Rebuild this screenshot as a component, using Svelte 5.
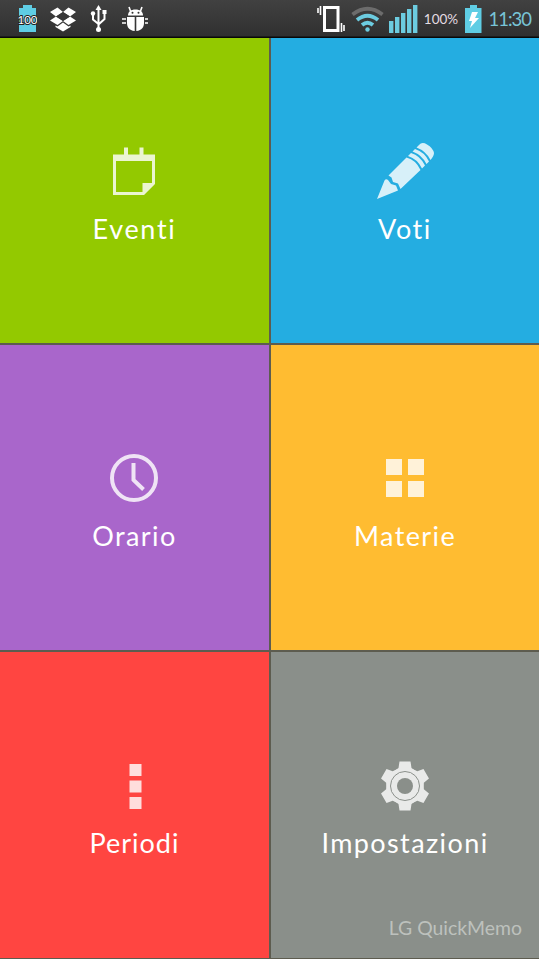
<script lang="ts">
  const tiles = [
    { id: "events", label: "Eventi" },
    { id: "marks", label: "Voti" },
    { id: "timetable", label: "Orario" },
    { id: "subjects", label: "Materie" },
    { id: "periods", label: "Periodi" },
    { id: "settings", label: "Impostazioni" },
  ];

  const toothAngles = [0, 60, 120, 180, 240, 300];
  const signalBars = [12, 16, 20, 24, 28];
</script>

<div class="screen">
  <header>
    <div class="notifications">
      <svg width="19" height="38" viewBox="0 0 19 38">
        <path d="M5 5h9v3h4v24H1V8h4z" fill="#5fcde4" />
        <text x="9.5" y="24" text-anchor="middle" class="level">100</text>
      </svg>
      <svg width="26" height="38" viewBox="0 0 26 38" fill="#fff">
        <path d="M7.5 7.5 13 12 6 16.5 0 12zM18.5 7.5 26 12 20 16.5 13 12zM0 20.5 6 16.5 13 21 7.5 25zM26 20.5 20 16.5 13 21 18.5 25zM13 22.5 18.5 26.5 20.5 25.5V27L13 31.5 5.500 27V25.5L7.5 26.5z" />
        <path d="M6 16.5 13 12 20 16.5 13 21z" fill="#383838" />
      </svg>
      <svg width="20" height="38" viewBox="0 0 20 38" fill="#fff">
        <path d="M9.5 5 12.5 10h-6z" />
        <path d="M9.5 9v20M4 14v5.5l5.5 4.5M15.5 13v6l-6 5.5" fill="none" stroke="#fff" stroke-width="2" />
        <circle cx="4" cy="13.5" r="2.2" />
        <rect x="13.5" y="10" width="4" height="4" />
        <circle cx="9.5" cy="29.5" r="2.5" />
      </svg>
      <svg width="26" height="38" viewBox="0 0 26 38" fill="#fff">
        <path d="M6 15.5c0-4 3-6 7.5-6s7.5 2 7.5 6z" />
        <path d="M8.5 11 7 7M18.5 11 20 7M0 19h4M0 23h4M23 19h3M23 23h3" stroke="#fff" stroke-width="1.6" />
        <path d="M5 17h7.7v14C7 30.5 5 27 5 23zM14.3 17H22v6c0 4-2 7.5-7.7 8z" />
        <circle cx="10.5" cy="12.8" r="1" fill="#333" />
        <circle cx="16.5" cy="12.8" r="1" fill="#333" />
      </svg>
    </div>
    <div class="indicators">
      <svg width="29" height="38" viewBox="0 0 29 38" fill="none" stroke="#fff">
        <rect x="7.5" y="7.5" width="13.5" height="23" stroke-width="3" />
        <path d="M1 8v5M3.5 6v9M24.5 23v9M27 25v6" stroke-width="1.6" />
      </svg>
      <svg width="33" height="38" viewBox="0 0 33 38" fill="none" stroke="#6ccce0" stroke-width="3.8">
        <path d="M1.5 14.5q15-11.5 30 0" stroke="#6c6c6c" />
        <path d="M6 20q10.5-8.5 21 0M11 25q5.5-4.5 11 0" />
        <circle cx="16.5" cy="29.5" r="2.2" fill="#6ccce0" stroke="none" />
      </svg>
      <svg width="29" height="38" viewBox="0 0 29 38" fill="#6ccce0">
        {#each signalBars as height, i}
          <rect x={i * 6} y={33 - height} width="4.4" {height} />
        {/each}
      </svg>
      <span class="percent">100%</span>
      <svg width="18" height="38" viewBox="0 0 18 38">
        <path d="M6 5h7v3h4.500v25H1V8h5z" fill="#5fcde4" />
        <path d="M8 12h6l-3 6h4L6 28l2-7H5z" fill="#fff" />
      </svg>
      <span class="clock">11:30</span>
    </div>
  </header>

  <main>
    {#each tiles as tile}
      <div class="tile {tile.id}">
        <svg class="icon" width="64" height="64" viewBox="0 0 64 64">
          {#if tile.id === "events"}
            <path fill-rule="evenodd" d="M11 14.5h11V7.500h4v7h11.5v-7h4v7H53V44L42 55H11zM14 21v31h26.5v-9H50V21z" />
          {:else if tile.id === "marks"}
            <path d="M4 59 11.5 40.5Q13 38.5 15 40L18 44l5 1.5 2 5zM15.5 35.5 33.5 17.5Q43 20 47.5 30L27.5 49 25 43.5 20 42 18.5 37.5z" />
            <path d="M35 16 38 13Q47 15.5 52 25.5L49 28.5Q44.5 19 35 16zM39.5 11.5 42 9Q51.5 12 56 21.5L53.5 24Q49 15 39.5 11.5zM43.5 7.500 46 5Q49 1.5 54 4.5 60 8 61 13 61 16 57.5 20 53 11 43.5 7.5z" />
          {:else if tile.id === "timetable"}
            <g fill="none" stroke="#fff" stroke-width="4">
              <circle cx="32" cy="31" r="22" />
              <path d="M31.5 16v17l10 9.5" />
            </g>
          {:else if tile.id === "subjects"}
            <path d="M13 12h16v16H13zM35 12h16v16H35zM13 34h16v16H13zM35 34h16v16H35z" />
          {:else if tile.id === "periods"}
            <path d="M27.5 10h12v12h-12zM27.5 26.5h12v12h-12zM27.5 43h12v12h-12z" />
          {:else}
            <mask id="hub">
              <rect width="64" height="64" fill="#fff" />
              <circle cx="32" cy="32" r="8" fill="#000" />
              <circle cx="32" cy="32" r="14.5" fill="none" stroke="#000" stroke-width="1" />
            </mask>
            <g mask="url(#hub)">
              <path d="M32 14.5 47 23v18L32 49.5 17 41V23z" />
              {#each toothAngles as angle}
                <path d="M26.5 7.5h11l1 6.5 5 3.500L32 28 20.5 17.500l5-3.500z" transform="rotate({angle} 32 32)" />
              {/each}
            </g>
          {/if}
        </svg>
        <span class="label">{tile.label}</span>
        {#if tile.id === "settings"}
          <span class="watermark">LG QuickMemo</span>
        {/if}
      </div>
    {/each}
  </main>
</div>

<style>
  .screen {
    display: flex;
    flex-direction: column;
    width: 539px;
    height: 959px;
    overflow: hidden;
    font-family: Lato, "Open Sans", sans-serif;
    background: #5d5c4f;
  }

  header {
    flex: 0 0 38px;
    display: flex;
    justify-content: space-between;
    box-sizing: border-box;
    padding: 0 8px 0 18px;
    background: linear-gradient(#414141, #303030 36px, #080808 37px);
  }

  .notifications,
  .indicators {
    display: flex;
    align-items: center;
  }

  .notifications {
    gap: 13px;
  }

  .indicators {
    gap: 5px;
  }

  header svg {
    flex: none;
    display: block;
  }

  .level {
    font-size: 11.5px;
    fill: #fff;
    stroke: #222;
    stroke-width: 2px;
    paint-order: stroke;
  }

  .percent {
    width: 36px;
    text-align: center;
    font-size: 13.5px;
    color: #e4dce2;
    white-space: nowrap;
  }

  .clock {
    width: 44px;
    text-align: right;
    font-size: 18.5px;
    letter-spacing: -1px;
    color: #78c4d6;
    white-space: nowrap;
  }

  main {
    flex: 1;
    display: grid;
    grid-template-columns: 269px 268px;
    grid-template-rows: 305px 305px 306px;
    gap: 2px;
  }

  .tile {
    position: relative;
    display: flex;
    flex-direction: column;
    align-items: center;
    padding-top: 102px;
  }

  .tile:nth-child(odd) .icon {
    margin-right: 1px;
  }

  .icon {
    flex: none;
    fill: #fff;
    opacity: 0.82;
  }

  .label {
    margin-top: 8px;
    font-size: 27px;
    line-height: 34px;
    letter-spacing: 1.4px;
    color: #fff;
    white-space: nowrap;
  }

  .events {
    background: #93c900;
  }

  .events .label {
    letter-spacing: 1.7px;
  }

  .marks {
    background: #24ade1;
  }

  .marks .label {
    letter-spacing: 1.6px;
  }

  .timetable {
    background: #a966cb;
  }

  .subjects {
    background: #ffbc31;
  }

  .periods {
    background: #ff4541;
  }

  .periods .label {
    letter-spacing: 1px;
  }

  .settings {
    background: #8a8f8a;
  }

  .watermark {
    position: absolute;
    right: 17px;
    bottom: 17px;
    font-size: 19.4px;
    line-height: 26px;
    color: #bdc1bd;
  }
</style>
